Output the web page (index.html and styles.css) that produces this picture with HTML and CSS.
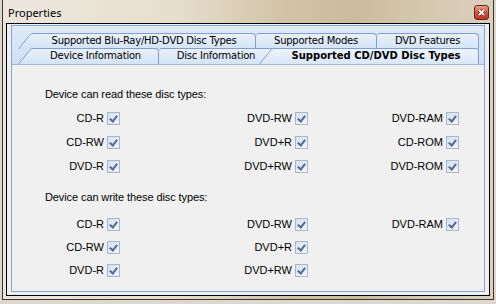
FILE: index.html
```html
<!DOCTYPE html>
<html lang="en">
<head>
    <meta charset="UTF-8">
    <title>Properties</title>
    <link rel="stylesheet" href="styles.css">
</head>
<body>
    <!-- shared gradients for the slanted tab edges -->
    <svg class="defs" width="0" height="0">
        <linearGradient id="tabfill" x1="0" y1="0" x2="0" y2="1">
            <stop offset="0" stop-color="#eaf1fb"/>
            <stop offset="1" stop-color="#d3e3f6"/>
        </linearGradient>
        <linearGradient id="selfill" x1="0" y1="0" x2="0" y2="1">
            <stop offset="0" stop-color="#eef4fc"/>
            <stop offset="1" stop-color="#d9e7f8"/>
        </linearGradient>
    </svg>

    <div class="window">
        <div class="titlebar">
            <span class="title">Properties</span>
            <span class="close">
                <svg width="13" height="13" viewBox="0 0 13 13">
                    <path d="M4 4 L9 9 M9 4 L4 9" stroke="#5a1a10" stroke-width="3"/>
                    <path d="M4 4 L9 9 M9 4 L4 9" stroke="#fff" stroke-width="1.8"/>
                </svg>
            </span>
        </div>

        <div class="client">
            <div class="tabctl">
                <div class="tabhead">
                    <div class="tabrow back">
                        <div class="tab tab-blu">
                            <svg class="slant" viewBox="0 0 15 16"><path d="M0,16 L11.5,2.5 Q13,0.5 15,0.5 L15,16 Z" fill="url(#tabfill)"/><path d="M0.5,16 L11.5,2.5 Q13,0.5 15,0.5" fill="none" stroke="#7f9fd3"/></svg>
                            Supported Blu-Ray/HD-DVD Disc Types
                        </div>
                        <div class="tab tab-modes">Supported Modes</div>
                        <div class="tab tab-feat">DVD Features</div>
                    </div>
                    <div class="tabrow front">
                        <div class="tab tab-dev">
                            <svg class="slant" viewBox="0 0 15 16"><path d="M0,16 L11.5,2.5 Q13,0.5 15,0.5 L15,16 Z" fill="url(#tabfill)"/><path d="M0.5,16 L11.5,2.5 Q13,0.5 15,0.5" fill="none" stroke="#7f9fd3"/></svg>
                            Device Information
                        </div>
                        <div class="tab tab-disc">Disc Information</div>
                        <div class="tab tab-types selected">
                            <svg class="slant" viewBox="0 0 15 16"><path d="M0,16 L11.5,2.5 Q13,0.5 15,0.5 L15,16 Z" fill="url(#selfill)"/><path d="M0.5,16 L11.5,2.5 Q13,0.5 15,0.5" fill="none" stroke="#7f9fd3"/></svg>
                            Supported CD/DVD Disc Types
                        </div>
                    </div>
                </div>

                <div class="panel">
                    <p class="caption">Device can read these disc types:</p>
                    <div class="discs">
                        <div class="disc">CD-R <span class="check"></span></div>
                        <div class="disc">DVD-RW <span class="check"></span></div>
                        <div class="disc">DVD-RAM <span class="check"></span></div>
                        <div class="disc">CD-RW <span class="check"></span></div>
                        <div class="disc">DVD+R <span class="check"></span></div>
                        <div class="disc">CD-ROM <span class="check"></span></div>
                        <div class="disc">DVD-R <span class="check"></span></div>
                        <div class="disc">DVD+RW <span class="check"></span></div>
                        <div class="disc">DVD-ROM <span class="check"></span></div>
                    </div>

                    <p class="caption write">Device can write these disc types:</p>
                    <div class="discs write-list">
                        <div class="disc">CD-R <span class="check"></span></div>
                        <div class="disc">DVD-RW <span class="check"></span></div>
                        <div class="disc">DVD-RAM <span class="check"></span></div>
                        <div class="disc">CD-RW <span class="check"></span></div>
                        <div class="disc">DVD+R <span class="check"></span></div>
                        <div class="disc empty"></div>
                        <div class="disc">DVD-R <span class="check"></span></div>
                        <div class="disc">DVD+RW <span class="check"></span></div>
                        <div class="disc empty"></div>
                    </div>
                </div>
            </div>
        </div>
    </div>
</body>
</html>
```

FILE: styles.css
```css
body { margin: 0; width: 496px; height: 304px; overflow: hidden; background: #dcd8d0; font-family: "Liberation Sans", Arial, sans-serif; }
.defs { position: absolute; }

/* window frame */
.window { box-sizing: border-box; height: 300px; margin: 0 2px; display: flex; flex-direction: column;
  border: 1px solid #3a3733; border-top: none;
  background: linear-gradient(90deg, #ece7de 0%, #e7dece 35%, #d2c3a6 58%, #cbbb9d 72%, #d7cab2 88%, #dad0bd 100%); }
.titlebar { box-sizing: border-box; height: 23px; flex: none; display: flex; justify-content: space-between; padding: 3px 4px 0 5px; }
.title { font-family: "Noto Sans", "Open Sans", sans-serif; font-size: 11px; line-height: 20px; color: #000; }
.close { box-sizing: border-box; width: 15px; height: 15px; margin-top: 2px; display: flex; align-items: center; justify-content: center;
  border: 1px solid #6b2518; border-radius: 3px; background: linear-gradient(#e9a08a, #d0583e 50%, #b83a22); }

.client { flex: 1; display: flex; flex-direction: column; margin: 0 3px 3px; padding: 1px 4px 3px; border: 1px solid #000; background: #f0f0f0; }

/* tab control */
.tabctl { flex: 1; display: flex; flex-direction: column; border: 1px solid #84a5d6; }
.tabhead { box-sizing: border-box; height: 38px; flex: none; padding-top: 7px; background: linear-gradient(#dfeaf9, #cfdff4); }
.tabrow { display: flex; height: 16px; margin-left: 21px; position: relative; }
.tabrow.front { margin-top: -1px; z-index: 1; }
.tab { position: relative; box-sizing: border-box; height: 16px; border-top: 1px solid #7f9fd3; border-right: 1px solid #7f9fd3; border-top-right-radius: 4px;
  background: linear-gradient(#eaf1fb, #d3e3f6); font-family: "DejaVu Sans", Verdana, sans-serif; font-size: 10px; letter-spacing: -0.25px;
  line-height: 13px; text-align: center; white-space: nowrap; color: #000; }
.tab + .tab { border-top-left-radius: 3px; }
.tab .slant { position: absolute; left: -15px; top: -1px; width: 15px; height: 16px; }
.tab-blu { width: 223px; }
.tab-modes { width: 121px; }
.tab-feat { width: 102px; }
.tab-dev { width: 126px; }
.tab-disc { width: 115px; }
.tab-types { width: 205px; }
.tab.selected { z-index: 2; font-weight: bold; letter-spacing: 0; background: linear-gradient(#eef4fc, #d9e7f8); border-top-left-radius: 0; }

/* page body */
.panel { flex: 1; border-top: 1px solid #9bb6e0; background: #f0f0f0; padding: 23px 0 0 33px; }
.caption { margin: 0; font-size: 11px; line-height: 13px; letter-spacing: -0.1px; color: #000; }
.caption.write { margin-top: 18px; }
.discs { display: grid; grid-template-columns: 75px 188px 151px; row-gap: 11px; margin-top: 11px; }
.discs.write-list { margin-top: 14px; row-gap: 10px; }
.disc { display: flex; align-items: center; justify-content: flex-end; gap: 3px; height: 13px; font-size: 11px; line-height: 13px; color: #000; }
.check { position: relative; box-sizing: border-box; width: 13px; height: 13px; flex: none; border: 1px solid #a2b6d6; background: linear-gradient(135deg, #d9e0ea, #f2f4f8); }
.check::after { content: ""; position: absolute; left: 3px; top: 1px; width: 3px; height: 6px; border: solid #506a94; border-width: 0 2px 2px 0; transform: rotate(38deg); }
```
